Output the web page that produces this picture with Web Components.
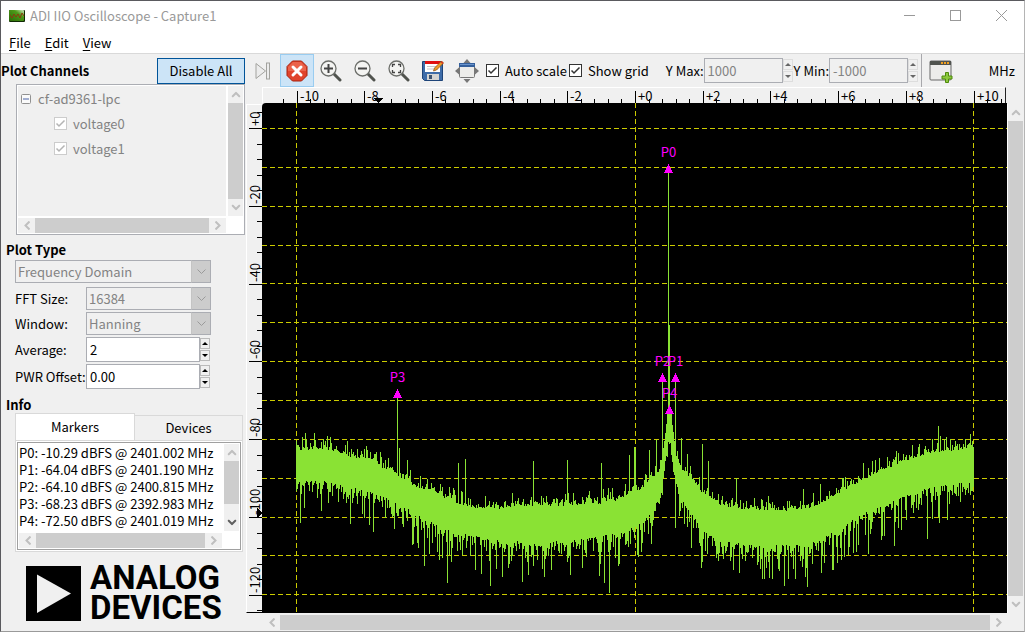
<!DOCTYPE html>
<html lang="en">
<head>
<meta charset="utf-8">
<title>ADI IIO Oscilloscope - Capture1</title>
<style>
html, body { height: 100%; margin: 0; }
body { font: 13px/16px "Noto Sans CJK SC", "Noto Sans", sans-serif; color: #000; background: #f0f0f0; }
</style>
</head>
<body>
<osc-window></osc-window>

<template id="t-window">
<style>
:host { display: flex; flex-direction: column; box-sizing: border-box; min-height: 100vh; border: 1px solid #5a5a5e; border-right-color: #b4b4b4; border-bottom-color: #9a9a9a; background: #f0f0f0; }
header { background: #fff; }
.body { flex: 1; display: grid; grid-template-columns: 245px minmax(0, 1fr); border-top: 1px solid #d9d9d9; }
.right { display: flex; flex-direction: column; min-width: 0; }
spectrum-view { flex: 1; }
</style>
<header><title-bar>ADI IIO Oscilloscope - Capture1</title-bar><menu-bar></menu-bar></header>
<div class="body">
  <side-panel></side-panel>
  <div class="right"><tool-strip></tool-strip><spectrum-view></spectrum-view></div>
</div>
</template>

<template id="t-title">
<style>
:host { display: flex; align-items: center; height: 29px; padding-left: 8px; color: #999; }
.name { flex: 1; padding-left: 5px; }
button { width: 46px; height: 29px; padding: 0; border: 0; background: none; display: grid; place-items: center; }
svg { display: block; }
</style>
<svg width="16" height="12" viewBox="0 0 16 12"><defs><linearGradient id="g" x1="0" y1="1" x2="1" y2="0"><stop offset="0" stop-color="#2c6a08"/><stop offset=".65" stop-color="#4c9a18"/><stop offset="1" stop-color="#d4ecc4"/></linearGradient></defs><rect width="16" height="12" rx="1" fill="#102a04"/><rect width="15" height="11" rx="1" fill="url(#g)"/><path d="M1 5l2 3 2-4 2 3 2-3 2 4 2-5 2 3" fill="none" stroke="#8a3c10"/></svg>
<span class="name"><slot></slot></span>
<button aria-label="Minimize"><svg width="11" height="11"><path d="M0 5.500h11" stroke="#999"/></svg></button>
<button aria-label="Maximize"><svg width="11" height="11"><rect x=".5" y=".5" width="10" height="10" fill="none" stroke="#999"/></svg></button>
<button aria-label="Close"><svg width="11" height="11"><path d="M0 0l11 11M11 0L0 11" stroke="#999"/></svg></button>
</template>

<template id="t-menu">
<style>
:host { display: flex; height: 23px; padding-left: 2px; gap: 2px; }
button { font: inherit; height: 23px; border: 0; background: none; padding: 2px 6px 0; color: #000; }
u { text-underline-offset: 2px; }
</style>
<button><u>F</u>ile</button><button><u>E</u>dit</button><button><u>V</u>iew</button>
</template>

<template id="t-tools">
<style>
:host { display: flex; align-items: center; height: 33px; white-space: nowrap; }
button { width: 34px; height: 33px; padding: 0; border: 1px solid transparent; background: none; display: grid; place-items: center; flex: none; box-sizing: border-box; }
button.on { background: #cce4f7; border-color: #99ccf0; }
tick-box { margin-left: 2px; }
.ymax { margin-left: 17px; }
.sep { width: 1px; height: 33px; background: #a8a8ac; margin: 0 2px; flex: none; }
.unit { margin-left: auto; padding-right: 9px; }
svg { display: block; }
</style>
<button aria-label="Single capture"><svg width="16" height="18" viewBox="0 0 16 18" fill="#ececec" stroke="#a2a29e"><path d="M1 1.500L10.500 9 1 16.500z"/><rect x="11.500" y="1" width="3" height="16"/></svg></button>
<button class="on" aria-label="Stop capture"><svg width="22" height="22" viewBox="0 0 22 22"><path d="M6.500 1h9L21 6.500v9L15.500 21h-9L1 15.500v-9z" fill="#e0442c" stroke="#a8200c"/><path d="M7 2h8l5 5v4H2V7z" fill="#f07058" opacity=".7"/><path d="M7 7l8 8M15 7l-8 8" stroke="#fff" stroke-width="3" stroke-linecap="round"/></svg></button>
<button aria-label="Zoom in"><svg width="22" height="22" viewBox="0 0 22 22"><path d="M14 14l6 6" stroke="#50534e" stroke-width="3" stroke-linecap="round"/><circle cx="8.500" cy="8.500" r="7.500" fill="#f4f4f2" stroke="#6c6e6a" stroke-width="1.300"/><path d="M4 8.500h9M8.500 4v9" stroke="#444" stroke-width="2"/></svg></button>
<button aria-label="Zoom out"><svg width="22" height="22" viewBox="0 0 22 22"><path d="M14 14l6 6" stroke="#50534e" stroke-width="3" stroke-linecap="round"/><circle cx="8.500" cy="8.500" r="7.500" fill="#f4f4f2" stroke="#6c6e6a" stroke-width="1.300"/><path d="M4 8.500h9" stroke="#444" stroke-width="2"/></svg></button>
<button aria-label="Zoom to fit"><svg width="22" height="22" viewBox="0 0 22 22"><path d="M14 14l6 6" stroke="#50534e" stroke-width="3" stroke-linecap="round"/><circle cx="8.500" cy="8.500" r="7.500" fill="#f4f4f2" stroke="#6c6e6a" stroke-width="1.300"/><path d="M4.500 7V4.500H7M10 4.500h2.500V7M12.500 10v2.500H10M7 12.500H4.500V10" fill="none" stroke="#444" stroke-width="1.300"/></svg></button>
<button aria-label="Save as"><svg width="24" height="24" viewBox="0 0 24 24"><path d="M1.500 2.500h19l1 1v18h-18l-2-2z" fill="#3e6ca8" stroke="#1e4478"/><path d="M4 2h15v11H4z" fill="#fff"/><path d="M4 2h15v3H4z" fill="#e01010"/><path d="M6 7.500h11M6 10h11" stroke="#c8c8c8"/><path d="M6 15h12v6H6z" fill="#d4d4d2"/><path d="M8 16h3v4H8z" fill="#3c5270"/><path d="M12.500 12l1-3 7-7 2 2-7 7z" fill="#f09a28" stroke="#8a4c08" stroke-width=".7"/><path d="M20 2.500l2 2" stroke="#d83020" stroke-width="1.500"/></svg></button>
<button aria-label="Full screen"><svg width="24" height="24" viewBox="0 0 24 24"><path d="M12 0l3.500 4h-7zM12 24l3.500-4h-7zM0 12l4-3.500v7zM24 12l-4-3.500v7z" fill="#777"/><rect x="4.500" y="4.500" width="15" height="14" rx="1" fill="#ececea" stroke="#777"/><path d="M4 4h16v4H4z" fill="#35609c"/><path d="M5 5.500h14" stroke="#6a94cc"/></svg></button>
<tick-box checked>Auto scale</tick-box>
<tick-box checked>Show grid</tick-box>
<spin-field class="ymax" label="Y Max:" value="1000" disabled style="--field: 79px"></spin-field>
<spin-field label="Y Min:" value="-1000" disabled style="--field: 79px"></spin-field>
<span class="sep"></span>
<button aria-label="New plot"><svg width="24" height="24" viewBox="0 0 24 24"><rect x="1" y="2" width="21" height="19" rx="1" fill="#ececea" stroke="#666"/><path d="M1 2h21v4H1z" fill="#50534e"/><path d="M12 4h9" stroke="#f0a020" stroke-width="2" stroke-dasharray="2 1"/><path d="M16.500 13.500h3v3.500H23v3h-3.500v3.500h-3V20H13v-3h3.500z" fill="#8cc83c" stroke="#4e8a0c"/></svg></button>
<span class="unit">MHz</span>
</template>

<template id="t-tick">
<style>
:host { display: block; color: #000; }
label { display: flex; align-items: center; gap: 6px; }
.box { display: grid; flex: none; }
.box > * { grid-area: 1 / 1; }
input { appearance: none; margin: 0; width: 13px; height: 13px; border: 1px solid #333; background: #fff; }
:host([disabled]) { color: #838383; }
:host([disabled]) input { border-color: #ccc; }
svg { color: #333; pointer-events: none; }
:host([disabled]) svg { color: #b4b4b4; }
</style>
<label><span class="box"><input type="checkbox"><svg width="13" height="13" viewBox="0 0 13 13"><path d="M2.500 6.500L5 9 10.500 3.500" fill="none" stroke="currentColor" stroke-width="1.500"/></svg></span><span><slot></slot></span></label>
</template>

<template id="t-spin">
<style>
:host { display: flex; align-items: center; }
label { width: var(--label, auto); white-space: nowrap; flex: none; }
input { box-sizing: border-box; width: var(--field, 114px); height: 25px; margin: 0; padding: 0 3px; border: 1px solid #abadb3; font: inherit; color: #000; background: #fff; border-radius: 0; }
input:disabled { color: #838383; background: #f0f0f0; }
.steps { display: flex; flex-direction: column; gap: 1px; margin-right: 1px; }
button { box-sizing: border-box; width: 10px; height: 11px; padding: 0; border: 1px solid #bbb; background: #f0f0f0; display: grid; place-items: center; color: #000; }
button:disabled { color: #666; border-color: #ddd; }
svg { display: block; }
</style>
<label for="f"></label><input id="f" type="text"><span class="steps"><button aria-label="Increase"><svg width="6" height="3"><path d="M0 3L3 0 6 3z" fill="currentColor"/></svg></button><button aria-label="Decrease"><svg width="6" height="3"><path d="M0 0L3 3 6 0z" fill="currentColor"/></svg></button></span>
</template>

<template id="t-combo">
<style>
:host { display: flex; align-items: center; }
label { width: var(--label, auto); white-space: nowrap; flex: none; }
label:empty { width: 0; }
.wrap { display: grid; width: var(--field, 125px); }
.wrap > * { grid-area: 1 / 1; }
select { appearance: none; box-sizing: border-box; width: 100%; height: 23px; margin: 0; padding: 0 22px 0 2px; border: 1px solid #abadb3; border-radius: 0; background: #f0f0f0; font: inherit; color: #838383; opacity: 1; }
.arrow { justify-self: end; align-self: stretch; width: 20px; background: #ccc; border: 1px solid #abadb3; border-left-color: #c4c4c4; box-sizing: border-box; display: grid; place-items: center; pointer-events: none; }
</style>
<label for="f"></label><span class="wrap"><select id="f" disabled><option></option></select><span class="arrow"><svg width="9" height="6"><path d="M.5 .5l4 4 4-4" fill="none" stroke="#9a9a9a"/></svg></span></span>
</template>

<template id="t-scroll">
<style>
:host { display: flex; background: #f0f0f0; height: 15px; color: #bfbfbf; }
:host([vertical]) { flex-direction: column; width: 15px; height: auto; }
.cap { flex: none; width: 17px; height: 15px; display: grid; place-items: center; }
:host([vertical]) .cap { width: 15px; height: 17px; }
:host([vertical]) svg { transform: rotate(90deg); }
.thumb { background: #cdcdcd; flex: 1; }
.rest { flex: 0 0 var(--rest, 0px); }
.end { color: var(--end, #bfbfbf); }
</style>
<span class="cap"><svg width="6" height="9"><path d="M5.500 .5l-4 4 4 4" fill="none" stroke="currentColor" stroke-width="2"/></svg></span><span class="thumb"></span><span class="rest"></span><span class="cap end"><svg width="6" height="9"><path d="M.5 .5l4 4-4 4" fill="none" stroke="currentColor" stroke-width="2"/></svg></span>
</template>

<template id="t-side">
<style>
:host { display: flex; flex-direction: column; }
h2 { margin: 0; font-size: 13px; line-height: 16px; font-weight: bold; }
.head { display: flex; align-items: center; justify-content: space-between; height: 30px; box-sizing: border-box; padding: 3px 1px 0 0; }
.all { font: inherit; width: 88px; height: 26px; border: 1px solid #005499; background: #cce4f7; padding: 0; }
.tree { margin: 0 1px 0 15px; border: 1px solid #abadb3; background: #fff; padding: 1px; display: grid; grid-template: 130px 15px / 1fr 15px; gap: 2px; }
.nodes { background: #f0f0f0; color: #838383; padding: 0 3px; }
.node { display: flex; align-items: center; height: 25px; gap: 7px; }
.leaf { padding-left: 33px; }
.type { margin: 7px 0 2px 5px; }
.fields { margin-left: 14px; --label: 71px; display: flex; flex-direction: column; gap: 2px; }
.first { margin-bottom: 2px; --field: 196px; }
.info { margin: 8px 0 0 5px; }
.tabs { display: flex; align-items: flex-end; margin-left: 14px; height: 27px; }
.tabs button { font: inherit; box-sizing: border-box; border: 1px solid #d9d9d9; border-bottom: 0; padding: 0; width: 109px; height: 25px; background: #f0f0f0; margin-right: 1px; }
.tabs button.on { width: 120px; height: 27px; background: #fff; margin: 0 -1px 0 0; }
.page { margin: 0 3px 0 14px; border: 1px solid #d9d9d9; background: #fff; padding: 1px; }
.view { border: 1px solid #a0a0a0; padding: 1px; display: grid; grid-template: 87px 15px / 1fr 15px; gap: 2px; }
.lines { line-height: 17px; white-space: nowrap; }
.lines div { height: 17px; }
</style>
<div class="head"><h2>Plot Channels</h2><button class="all">Disable All</button></div>
<div class="tree">
  <div class="nodes">
    <div class="node"><svg width="10" height="10" viewBox="0 0 10 10"><rect x=".5" y=".5" width="9" height="9" rx="1" fill="#fafafa" stroke="#919191"/><path d="M2 5h6" stroke="#4b63a7"/></svg>cf-ad9361-lpc</div>
    <div class="node leaf"><tick-box checked disabled>voltage0</tick-box></div>
    <div class="node leaf"><tick-box checked disabled>voltage1</tick-box></div>
  </div>
  <scroll-bar vertical></scroll-bar>
  <scroll-bar></scroll-bar>
</div>
<h2 class="type">Plot Type</h2>
<div class="fields">
  <combo-field class="first" value="Frequency Domain"></combo-field>
  <combo-field label="FFT Size:" value="16384"></combo-field>
  <combo-field label="Window:" value="Hanning"></combo-field>
  <spin-field label="Average:" value="2"></spin-field>
  <spin-field label="PWR Offset:" value="0.00"></spin-field>
</div>
<h2 class="info">Info</h2>
<div class="tabs"><button class="on">Markers</button><button>Devices</button></div>
<div class="page"><div class="view">
  <div class="lines"><div>P0: -10.29 dBFS @ 2401.002 MHz</div><div>P1: -64.04 dBFS @ 2401.190 MHz</div><div>P2: -64.10 dBFS @ 2400.815 MHz</div><div>P3: -68.23 dBFS @ 2392.983 MHz</div><div>P4: -72.50 dBFS @ 2401.019 MHz</div></div>
  <scroll-bar vertical style="--rest: 10px; --end: #606060"></scroll-bar>
  <scroll-bar></scroll-bar>
</div></div>
<brand-logo></brand-logo>
</template>

<template id="t-logo">
<style>
:host { display: flex; gap: 9px; padding: 14px 0 0 25px; align-items: flex-start; }
svg { flex: none; }
.words { font: bold 33px/30px Roboto, "Liberation Sans", sans-serif; margin-top: -3px; }
.words span { display: block; }
</style>
<svg width="55" height="55"><rect width="55" height="55" fill="#000"/><path d="M11 8.500L45 27.500 11 47z" fill="#f0f0f0"/></svg>
<div class="words"><span>ANALOG</span><span>DEVICES</span></div>
</template>

<template id="t-spectrum">
<style>
:host { display: grid; grid-template: 16px minmax(400px, 1fr) 18px / 16px minmax(0, 1fr) 17px; }
svg { display: block; width: 100%; height: 100%; min-width: 0; overflow: visible; }
.cell { min-height: 0; min-width: 0; position: relative; }
.cell svg { position: absolute; inset: 0; }
.top { grid-area: 1 / 2; border-top: 1px solid #fff; border-left: 1px solid #fff; border-right: 1px solid #222; margin-right: 1px; }
.left { grid-area: 2 / 1; border-left: 1px solid #fff; border-bottom: 1px solid #000; margin-top: 1px; border-top: 1px solid #fff; }
.plot { grid-area: 2 / 2; background: #000; border-radius: 4px 0 0 0; }
.vs { grid-area: 1 / 3 / 3 / 4; margin: 17px 1px 0 0; border-left: 1px solid #fff; }
.hs { grid-area: 3 / 2; margin: 2px 0 0 1px; }
</style>
<div class="cell top"><svg id="h" shape-rendering="crispEdges"></svg></div>
<div class="cell left"><svg id="v" shape-rendering="crispEdges"></svg></div>
<div class="cell plot"><svg id="p" shape-rendering="crispEdges"></svg></div>
<scroll-bar class="vs" vertical></scroll-bar>
<scroll-bar class="hs"></scroll-bar>
</template>

<script>
class Base extends HTMLElement {
  constructor(id) {
    super();
    this.attachShadow({ mode: "open" }).append(document.getElementById(id).content.cloneNode(true));
  }
  $(s) { return this.shadowRoot.querySelector(s); }
}
const simple = (tag, id) => customElements.define(tag, class extends Base { constructor() { super(id); } });

customElements.define("tick-box", class extends Base {
  constructor() { super("t-tick"); }
  connectedCallback() {
    this.$("input").checked = this.hasAttribute("checked");
    this.$("input").disabled = this.hasAttribute("disabled");
  }
});
customElements.define("spin-field", class extends Base {
  constructor() { super("t-spin"); }
  connectedCallback() {
    this.$("label").textContent = this.getAttribute("label");
    this.$("input").value = this.getAttribute("value");
    const off = this.hasAttribute("disabled");
    for (const c of this.shadowRoot.querySelectorAll("input, button")) c.disabled = off;
  }
});
customElements.define("combo-field", class extends Base {
  constructor() { super("t-combo"); }
  connectedCallback() {
    const label = this.getAttribute("label");
    if (label) this.$("label").textContent = label;
    else this.$("select").setAttribute("aria-label", "Plot type");
    this.$("option").textContent = this.getAttribute("value");
  }
});

/* Chart space is 745 x 510 units; it is scaled to the size of the plot. */
const W = 745, H = 510, STEP_X = 33.85, ZERO_Y = 25, STEP_Y = 3.89;
const TOP = [[34,345],[58,343],[78,347],[94,353],[110,354],[118,362],[128,364],[138,373],[148,378],[158,384],[168,384],[183,393],[198,399],[213,402],[238,403],[258,400],[298,400],[338,398],[358,394],[368,387],[378,384],[388,374],[396,367],[400,352],[403,327],[405,309],[409,309],[411,330],[414,350],[420,365],[428,372],[438,385],[448,392],[458,399],[473,403],[498,404],[528,405],[543,403],[558,398],[578,387],[598,377],[618,365],[638,358],[658,350],[673,346],[688,345],[711,341]];
const BOTTOM = [[34,381],[58,381],[83,386],[103,391],[118,396],[138,406],[158,416],[178,428],[208,436],[238,441],[278,444],[318,440],[358,433],[378,424],[393,407],[400,387],[403,362],[406,341],[408,343],[411,372],[418,397],[428,413],[438,427],[448,436],[468,443],[498,446],[528,446],[558,441],[573,431],[588,421],[608,411],[628,403],[648,395],[668,388],[688,385],[711,383]];
const PEAKS = {40:334,43:330,52:330,85:338,118:349,135:294,137:345,145:357,196:360,203:356,271:358,305:357,339:360,367:352,372:344,373:346,387:347,394:337,400:278,406:70,407:222,413:278,419:335,425:351,440:341,446:358,474:375,541:386,558:381,601:360,610:358,625:354,657:341,676:323,678:333};
const DIPS = {38:420,88:421,111:429,131:413,151:441,162:463,180:455,185:480,219:471,228:483,240:474,260:479,266:472,308:472,320:465,337:473,342:480,347:490,375:452,376:454,380:440,413:425,429:445,439:465,471:467,504:465,507:475,522:483,533:476,545:484,570:467,571:467,594:449,606:451,632:443,665:436,677:420,685:417};
const lerp = (pts, x) => {
  let i = 1;
  while (i < pts.length - 1 && pts[i][0] < x) i++;
  const [a, b] = [pts[i - 1], pts[i]];
  return a[1] + (b[1] - a[1]) * (x - a[0]) / (b[0] - a[0]);
};
const trace = (() => {
  let seed = 9361;
  const rnd = () => (seed = (seed * 16807) % 2147483647) / 2147483647;
  const cols = [];
  for (let x = 34; x <= 711; x++) {
    const core = x > 399 && x < 415 ? .3 : 1;
    let t = lerp(TOP, x) + 3 - core * Math.min(14, -Math.log(rnd()) * 4);
    let b = lerp(BOTTOM, x) - 4 + core * Math.min(34, -Math.log(rnd()) * 10);
    if (PEAKS[x]) t = PEAKS[x];
    if (DIPS[x]) b = DIPS[x];
    cols.push([x, Math.round(t), Math.round(b)]);
  }
  return cols;
})();
const MARKERS = [["P0",406,61],["P1",413,270],["P2",400,270],["P3",135,286],["P4",407,302]];

customElements.define("spectrum-view", class extends Base {
  constructor() { super("t-spectrum"); }
  connectedCallback() {
    new ResizeObserver(() => this.draw()).observe(this);
    this.draw();
  }
  draw() {
    const box = this.$(".plot"), w = box.clientWidth, h = box.clientHeight;
    const X = x => Math.round(x * w / W), Y = y => Math.round(y * h / H);
    let ticks = "", names = "";
    for (let i = -52; i <= 54; i += 2) {
      const m = i / 5, x = X(373 + m * STEP_X);
      if (x < 4 || x > w - 4) continue;
      const major = i % 10 === 0;
      ticks += `M${x - .5} ${major ? 3 : 11}V15`;
      if (major) names += `<text x="${x + 2}" y="13">${m < 0 ? m : "+" + m}</text>`;
    }
    const ax = X(115);
    this.$("#h").innerHTML = `<path d="${ticks}" stroke="#000"/>${names}<path d="M${ax - 5} 10h10l-5 5z"/>`;

    ticks = names = "";
    for (let i = -1; i <= 31; i++) {
      const y = Y(ZERO_Y + i * 4 * STEP_Y);
      const major = i >= 0 && i % 5 === 0, db = -i * 4;
      ticks += `M${major ? 2 : 10} ${y - 1.5}H15`;
      if (major) names += `<text transform="translate(13 ${y - 4}) rotate(-90)">${db === 0 ? "+0" : db}</text>`;
    }
    const ay = Y(408);
    this.$("#v").innerHTML = `<path d="${ticks}" stroke="#000"/>${names}<path d="M10 ${ay - 5}v10l5-5z"/>`;

    let grid = "", wave = "", marks = "";
    for (let i = 0; i < 13; i++) grid += `M0 ${Y(ZERO_Y + i * 38.85) + .5}H${w}`;
    for (const x of [34, 373, 711]) grid += `M${X(x) + .5} 0V${h}`;
    for (const [x, t, b] of trace) wave += `M${X(x) + .5} ${Y(t)}V${Y(b)}`;
    for (const [n, x, y] of MARKERS) {
      const mx = X(x) + .5, my = Y(y);
      marks += `<path d="M${mx} ${my}l4.500 9h-9z"/><text x="${mx}" y="${my - 7}" text-anchor="middle">${n}</text>`;
    }
    this.$("#p").innerHTML = `<path d="${grid}" stroke="#cc0" stroke-dasharray="5 3"/><path d="${wave}" stroke="#8ae234" stroke-width="${Math.max(1, Math.ceil(w / W))}"/><g fill="#f0f">${marks}</g>`;
  }
});
simple("scroll-bar", "t-scroll");
simple("brand-logo", "t-logo");
simple("title-bar", "t-title");
simple("menu-bar", "t-menu");
simple("tool-strip", "t-tools");
simple("side-panel", "t-side");
simple("osc-window", "t-window");
</script>
</body>
</html>
